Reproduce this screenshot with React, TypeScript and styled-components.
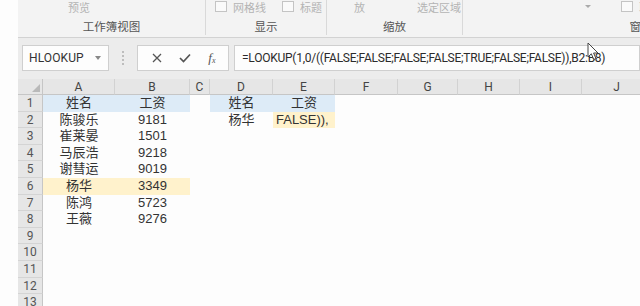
import React from 'react';
import styled, { createGlobalStyle } from 'styled-components';

const Global = createGlobalStyle`
  html, body { margin: 0; padding: 0; background: #fdfdfd; }
  body { font-family: Roboto, "Noto Sans CJK SC", sans-serif; }
`;

const Page = styled.div`
  position: relative;
  width: 640px;
  height: 306px;
  overflow: hidden;
  display: flex;
  background: #fdfdfd;
`;

const Gutter = styled.div`
  width: 18px;
  flex: none;
  background: #fdfdfd;
`;

const Main = styled.div`
  flex: 1;
  min-width: 0;
  display: flex;
  flex-direction: column;
  overflow: hidden;
`;

/* ---------- Ribbon ---------- */
const Ribbon = styled.div`
  height: 37px;
  flex: none;
  display: flex;
  align-items: flex-start;
  background: #f3f3f3;
  border-bottom: 1px solid #d2d2d2;
  overflow: hidden;
`;

const Group = styled.div<{ $w: number; $last?: boolean }>`
  width: ${p => p.$w}px;
  height: 35px;
  flex: none;
  display: flex;
  flex-direction: column;
  justify-content: space-between;
  border-right: ${p => (p.$last ? 'none' : '1px solid #d9d9d9')};
`;

const GroupTop = styled.div<{ $pad: number }>`
  height: 13px;
  display: flex;
  align-items: center;
  gap: 6px;
  padding-left: ${p => p.$pad}px;
  font-size: 11px;
  color: #b4b4b4;
  white-space: nowrap;
  overflow: hidden;
`;

const GroupLabel = styled.div`
  height: 16px;
  line-height: 16px;
  text-align: center;
  font-size: 11.5px;
  color: #555;
  white-space: nowrap;
`;

const Check = styled.span`
  width: 10px;
  height: 9px;
  border: 1px solid #c4c4c4;
  background: #fafafa;
  flex: none;
`;

const Spacer = styled.span<{ $w: number }>`
  width: ${p => p.$w}px;
  flex: none;
`;

const Caret = styled.span`
  width: 0;
  height: 0;
  border-left: 3px solid transparent;
  border-right: 3px solid transparent;
  border-top: 3px solid #aaa;
  flex: none;
`;

/* ---------- Formula bar ---------- */
const FormulaArea = styled.div`
  height: 41px;
  flex: none;
  display: flex;
  align-items: flex-start;
  padding: 7px 0 0 4px;
  box-sizing: border-box;
  background: #ececec;
`;

const Box = styled.div<{ $w?: number }>`
  height: 26px;
  box-sizing: border-box;
  ${p => (p.$w ? `width: ${p.$w}px; flex: none;` : 'flex: 1; min-width: 0;')}
  background: #fdfdfd;
  border: 1px solid #cfcfcf;
  display: flex;
  align-items: center;
`;

const NameText = styled.span`
  flex: 1;
  padding-left: 6px;
  font-size: 12px;
  color: #333;
  letter-spacing: 0.1px;
`;

const NameCaret = styled.span`
  width: 0;
  height: 0;
  margin-right: 7px;
  border-left: 3px solid transparent;
  border-right: 3px solid transparent;
  border-top: 4px solid #888;
`;

const Dots = styled.div`
  width: 28px;
  height: 26px;
  flex: none;
  display: flex;
  flex-direction: column;
  align-items: center;
  justify-content: center;
  gap: 2px;
  span {
    width: 2px;
    height: 2px;
    background: #bdbdbd;
  }
`;

const FuncIcons = styled.div`
  flex: 1;
  display: flex;
  align-items: center;
  justify-content: space-around;
  padding: 0 4px 0 6px;
  color: #555;
`;

const Fx = styled.span`
  font-family: "Liberation Serif", serif;
  font-style: italic;
  font-size: 13px;
  color: #555;
  sub {
    font-size: 8px;
    vertical-align: -1px;
  }
`;

const FormulaGap = styled.div`
  width: 5px;
  flex: none;
`;

const FormulaText = styled.span`
  padding-left: 7px;
  font-size: 12px;
  color: #2b2b2b;
  white-space: nowrap;
  letter-spacing: -0.25px;
`;

/* ---------- Grid ---------- */
const Sheet = styled.div`
  display: grid;
  grid-template-columns: 25px 72px 75px 20px 63px 62px 63px 60px 62px 62px 70px;
  grid-template-rows: 16px repeat(13, 16.6px);
  background: #fdfdfd;
`;

const Corner = styled.div`
  position: relative;
  background: #e6e6e6;
  border-right: 1px solid #c6c6c6;
  border-bottom: 1px solid #c6c6c6;
  &::after {
    content: '';
    position: absolute;
    right: 2px;
    bottom: 2px;
    width: 0;
    height: 0;
    border-left: 8px solid transparent;
    border-bottom: 8px solid #b9b9b9;
  }
`;

const ColHead = styled.div`
  background: #e6e6e6;
  border-right: 1px solid #d2d2d2;
  border-bottom: 1px solid #c6c6c6;
  font-size: 12px;
  color: #444;
  text-align: center;
  line-height: 16px;
`;

const RowHead = styled.div`
  background: #e6e6e6;
  border-right: 1px solid #c6c6c6;
  border-bottom: 1px solid #d4d4d4;
  font-size: 12px;
  color: #555;
  text-align: center;
  line-height: 16px;
  box-sizing: border-box;
`;

const Cell = styled.div<{ $fill?: string; $align?: string }>`
  background: ${p => p.$fill || 'transparent'};
  font-family: "Liberation Sans", "Noto Sans CJK SC", sans-serif;
  font-size: 13px;
  color: #333;
  text-align: ${p => p.$align || 'center'};
  padding-left: ${p => (p.$align === 'left' ? '3px' : '0')};
  line-height: 16.6px;
  white-space: nowrap;
  overflow: hidden;
`;

const Cursor = styled.svg`
  position: absolute;
  left: 587px;
  top: 42px;
`;

const BLUE = '#ddebf7';
const YELLOW = '#fff2cc';

type CellData = { t?: string; fill?: string; align?: string };

const cols = ['A', 'B', 'C', 'D', 'E', 'F', 'G', 'H', 'I', 'J'];

const data: Record<number, CellData[]> = {
  1: [
    { t: '姓名', fill: BLUE },
    { t: '工资', fill: BLUE },
    {},
    { t: '姓名', fill: BLUE },
    { t: '工资', fill: BLUE },
  ],
  2: [{ t: '陈骏乐' }, { t: '9181' }, {}, { t: '杨华' }, { t: 'FALSE)),', fill: YELLOW, align: 'left' }],
  3: [{ t: '崔莱晏' }, { t: '1501' }],
  4: [{ t: '马辰浩' }, { t: '9218' }],
  5: [{ t: '谢彗运' }, { t: '9019' }],
  6: [{ t: '杨华', fill: YELLOW }, { t: '3349', fill: YELLOW }],
  7: [{ t: '陈鸿' }, { t: '5723' }],
  8: [{ t: '王薇' }, { t: '9276' }],
};

export default function App() {
  const rows = Array.from({ length: 13 }, (_, i) => i + 1);
  return (
    <>
      <Global />
      <Page>
        <Gutter />
        <Main>
          <Ribbon>
            <Group $w={187}>
              <GroupTop $pad={50}>预览</GroupTop>
              <GroupLabel>工作簿视图</GroupLabel>
            </Group>
            <Group $w={120}>
              <GroupTop $pad={9}>
                <Check />
                <span>网格线</span>
                <Spacer $w={4} />
                <Check />
                <span>标题</span>
              </GroupTop>
              <GroupLabel>显示</GroupLabel>
            </Group>
            <Group $w={135}>
              <GroupTop $pad={27}>
                <span>放</span>
                <Spacer $w={40} />
                <span>选定区域</span>
              </GroupTop>
              <GroupLabel>缩放</GroupLabel>
            </Group>
            <Group $w={356} $last>
              <GroupTop $pad={122}>
                <Caret />
                <Spacer $w={18} />
                <Check />
                <span>取消</span>
              </GroupTop>
              <GroupLabel>窗口</GroupLabel>
            </Group>
          </Ribbon>

          <FormulaArea>
            <Box $w={87}>
              <NameText>HLOOKUP</NameText>
              <NameCaret />
            </Box>
            <Dots>
              <span />
              <span />
              <span />
              <span />
            </Dots>
            <Box $w={92}>
              <FuncIcons>
                <svg width="10" height="10" viewBox="0 0 10 10">
                  <path d="M1 1 L9 9 M9 1 L1 9" stroke="#555" strokeWidth="1.3" fill="none" />
                </svg>
                <svg width="12" height="10" viewBox="0 0 12 10">
                  <path d="M1 5 L4.5 8.5 L11 1.5" stroke="#555" strokeWidth="1.7" fill="none" />
                </svg>
                <Fx>
                  f<sub>x</sub>
                </Fx>
              </FuncIcons>
            </Box>
            <FormulaGap />
            <Box>
              <FormulaText>=LOOKUP(1,0/((FALSE;FALSE;FALSE;FALSE;TRUE;FALSE;FALSE)),B2:B8)</FormulaText>
            </Box>
          </FormulaArea>

          <Sheet>
            <Corner />
            {cols.map(c => (
              <ColHead key={c}>{c}</ColHead>
            ))}
            {rows.map(r => (
              <React.Fragment key={r}>
                <RowHead>{r}</RowHead>
                {cols.map((c, ci) => {
                  const d = (data[r] || [])[ci] || {};
                  return (
                    <Cell key={c} $fill={d.fill} $align={d.align}>
                      {d.t}
                    </Cell>
                  );
                })}
              </React.Fragment>
            ))}
          </Sheet>
        </Main>
        <Cursor width="13" height="19" viewBox="0 0 13 19">
          <path
            d="M1 1 L1 15 L4.3 11.8 L6.8 17.5 L9 16.5 L6.6 11 L11 11 Z"
            fill="#fff"
            stroke="#444"
            strokeWidth="1"
            strokeLinejoin="round"
          />
        </Cursor>
      </Page>
    </>
  );
}
